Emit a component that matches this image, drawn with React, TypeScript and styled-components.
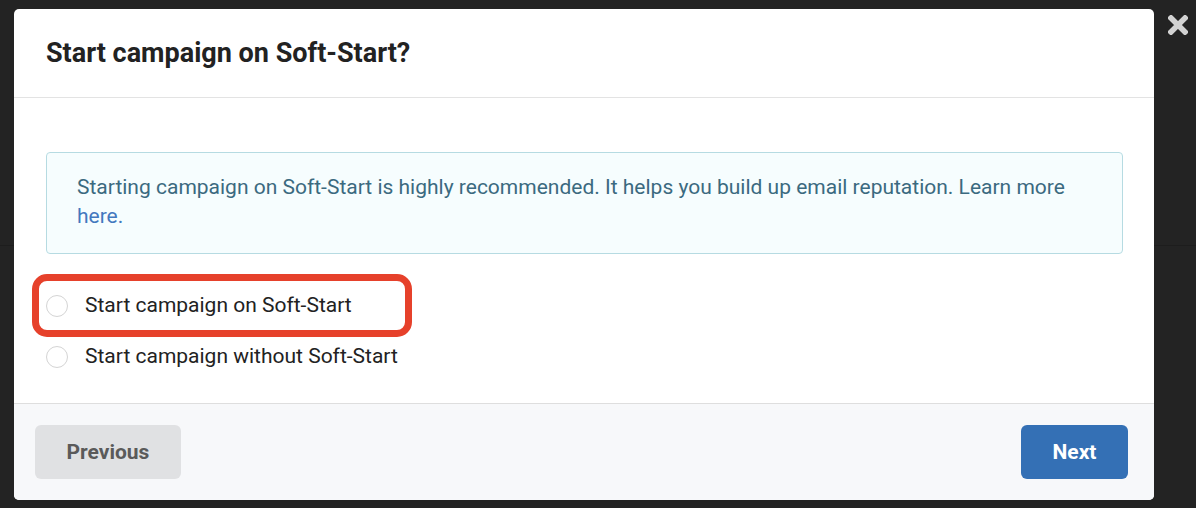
import styled, { createGlobalStyle } from "styled-components";

const GlobalStyle = createGlobalStyle`
    html, body {
        margin: 0;
        padding: 0;
        background: #232323;
        font-family: Roboto, "Liberation Sans", Arial, sans-serif;
    }
    *, *::before, *::after {
        box-sizing: border-box;
    }
`;

const CloseIcon = () => (
    <svg width="20" height="20" viewBox="0 0 20 20">
        <path d="M3 3 L17 17 M17 3 L3 17" stroke="#d2d2d2" strokeWidth="5.5" strokeLinecap="square" />
    </svg>
);

const options = [
    { id: "soft", label: "Start campaign on Soft-Start", highlighted: true },
    { id: "plain", label: "Start campaign without Soft-Start", highlighted: false },
];

export default function App() {
    return (
        <Backdrop>
            <GlobalStyle />
            <Modal>
                <Header>
                    <Title>Start campaign on Soft-Start?</Title>
                </Header>
                <Body>
                    <Alert>
                        Starting campaign on Soft-Start is highly recommended. It helps you build up email reputation. Learn more{" "}
                        <Link href="#">here.</Link>
                    </Alert>
                    <OptionList>
                        {options.map((opt) => (
                            <Option key={opt.id} $highlighted={opt.highlighted}>
                                <Radio type="radio" name="softstart" />
                                <span>{opt.label}</span>
                            </Option>
                        ))}
                    </OptionList>
                </Body>
                <Footer>
                    <Button $variant="secondary">Previous</Button>
                    <Button $variant="primary">Next</Button>
                </Footer>
            </Modal>
            <CloseButton aria-label="Close">
                <CloseIcon />
            </CloseButton>
        </Backdrop>
    );
}

const Backdrop = styled.div`
    position: relative;
    width: 1196px;
    height: 508px;
    padding: 9px 42px 8px 14px;
    display: flex;
    background:
        linear-gradient(to bottom, transparent 245px, #1d1d1d 245px, #1d1d1d 246px, transparent 246px),
        #232323;
    overflow: hidden;
`;

const Modal = styled.div`
    flex: 1;
    display: flex;
    flex-direction: column;
    background: #fff;
    border-radius: 5px;
    overflow: hidden;
`;

const Header = styled.div`
    height: 89px;
    padding: 0 32px;
    display: flex;
    align-items: center;
    border-bottom: 1px solid #e3e3e3;
`;

const Title = styled.h2`
    margin: 0;
    font-size: 27px;
    font-weight: 700;
    color: #222;
`;

const Body = styled.div`
    flex: 1;
    padding: 54px 31px 0 32px;
`;

const Alert = styled.div`
    border: 1px solid #b6dbe2;
    background: #f6fdfe;
    border-radius: 4px;
    padding: 20px 30px 22px;
    color: #3b6a80;
    font-size: 21px;
    line-height: 29px;
`;

const Link = styled.a`
    color: #4378be;
    text-decoration: none;
`;

const OptionList = styled.div`
    display: flex;
    flex-direction: column;
    gap: 28px;
    margin-top: 40px;
`;

const Option = styled.label<{ $highlighted: boolean }>`
    position: relative;
    display: flex;
    align-items: center;
    gap: 17px;
    font-size: 21px;
    line-height: 23px;
    color: #222;
    width: max-content;

    ${(p) =>
        p.$highlighted &&
        `
        &::after {
            content: "";
            position: absolute;
            left: -14px;
            top: -20px;
            width: 380px;
            height: 63px;
            border: 7px solid #e6412b;
            border-radius: 15px;
            pointer-events: none;
        }
    `}
`;

const Radio = styled.input`
    appearance: none;
    margin: 0;
    width: 22px;
    height: 22px;
    border-radius: 50%;
    border: 1px solid #d4d4d4;
    background: #fff;
`;

const Footer = styled.div`
    height: 97px;
    border-top: 1px solid #dedede;
    background: #f7f8fa;
    padding: 21px 26px 0 21px;
    display: flex;
    align-items: flex-start;
    justify-content: space-between;
`;

const Button = styled.button<{ $variant: "primary" | "secondary" }>`
    height: 54px;
    border: none;
    border-radius: 6px;
    font-family: inherit;
    font-size: 21px;
    font-weight: 700;
    padding: 0;
    width: ${(p) => (p.$variant === "primary" ? "107px" : "146px")};
    background: ${(p) => (p.$variant === "primary" ? "#3470b5" : "#e0e1e3")};
    color: ${(p) => (p.$variant === "primary" ? "#fff" : "#5a5a5a")};
`;

const CloseButton = styled.button`
    position: absolute;
    top: 15px;
    left: 1168px;
    padding: 0;
    border: none;
    background: none;
    line-height: 0;
`;
